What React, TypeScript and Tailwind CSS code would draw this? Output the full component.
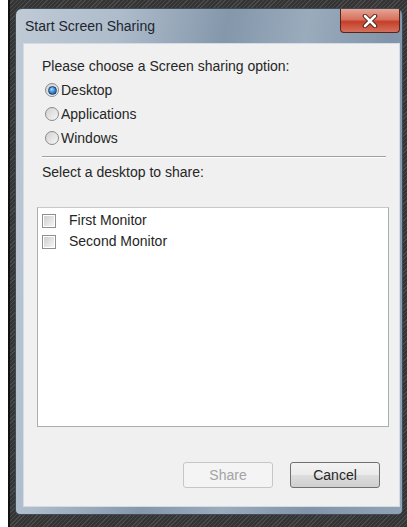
import React from "react";

const font = "font-['Liberation_Sans',Arial,sans-serif]";

function Radio({ label, checked }: { label: string; checked?: boolean }) {
    return (
        <div className="flex h-[24px] items-center">
            <span className="ml-[3px] flex h-[14px] w-[14px] items-center justify-center rounded-full border border-[#8b8b8b] bg-[linear-gradient(135deg,#d2d2d2,#f6f6f6)]">
                {checked && (
                    <span className="h-[9px] w-[9px] rounded-full border border-[#1c3e63] bg-[radial-gradient(circle_at_40%_35%,#a9dcff_0%,#3a8be0_45%,#0f4d9c_100%)]" />
                )}
            </span>
            <span className="ml-[2px] text-[14px] text-[#262626]">{label}</span>
        </div>
    );
}

function Check({ label }: { label: string }) {
    return (
        <div className="flex h-[21px] items-center">
            <span className="ml-[4px] h-[14px] w-[14px] border border-[#8f8f8f] bg-white p-[1px]">
                <span className="block h-full w-full bg-[linear-gradient(135deg,#cfcfcf,#f4f4f4)]" />
            </span>
            <span className="ml-[13px] text-[14px] text-[#262626]">{label}</span>
        </div>
    );
}

export default function App() {
    return (
        <div className={`flex h-[527px] w-[407px] overflow-hidden bg-white ${font}`}>
            <div className="w-[8px] shrink-0 bg-white" />
            <div className="w-[2px] shrink-0 bg-[#111]" />

            {/* desktop behind the dialog */}
            <div className="flex flex-1 flex-col bg-[repeating-linear-gradient(135deg,#343434_0px,#343434_2px,#4a4a4a_2px,#4a4a4a_3px)] pb-[12px] pl-[5px] pr-[4px] pt-[8px]">
                {/* aero window frame */}
                <div className="flex flex-1 flex-col rounded-b-[5px] rounded-t-[7px] border border-[#3f4c5a] bg-[linear-gradient(100deg,#bfcad5_0%,#aebccb_22%,#8497ab_45%,#9aabbc_62%,#8194a9_80%,#90a3b6_100%)]">
                    <div className="flex h-[34px] items-start justify-between">
                        <span className="ml-[9px] mt-[9px] text-[14px] leading-[16px] text-[#1d2630]">Start Screen Sharing</span>
                        <div className="mr-[2px] flex h-[24px] w-[60px] items-center justify-center rounded-b-[4px] border border-t-0 border-[#5a2318] bg-[linear-gradient(180deg,#e6a595_0%,#d8725f_45%,#c4402a_55%,#d5705c_100%)]">
                            <svg width="16" height="14" viewBox="0 0 16 14">
                                <path d="M3 2 L13 12 M13 2 L3 12" stroke="#4a1a12" strokeWidth="4.5" strokeLinecap="round" />
                                <path d="M3 2 L13 12 M13 2 L3 12" stroke="#fff" strokeWidth="2.6" strokeLinecap="round" />
                            </svg>
                        </div>
                    </div>

                    {/* client area */}
                    <div className="mb-[7px] ml-[7px] mr-[2px] flex flex-1 flex-col border border-[#d3dce5] bg-[#f0f0f0] pl-[18px] pr-[13px]">
                        <div className="mt-[14px] text-[14px] leading-[16px] text-[#262626]">
                            Please choose a Screen sharing option:
                        </div>
                        <div className="mt-[4px] flex flex-col">
                            <Radio label="Desktop" checked />
                            <Radio label="Applications" />
                            <Radio label="Windows" />
                        </div>
                        <div className="mt-[6px] h-[2px] border-t border-[#a0a0a0] border-b-white border-b" />
                        <div className="mt-[6px] text-[14px] leading-[16px] text-[#262626]">
                            Select a desktop to share:
                        </div>

                        <div className="-ml-[5px] -mr-[3px] mt-[27px] h-[220px] border border-[#abadb3] border-t-[#c9c9c9] bg-white pt-[2px]">
                            <Check label="First Monitor" />
                            <Check label="Second Monitor" />
                        </div>

                        <div className="mt-[35px] flex justify-end gap-[17px] pr-[6px]">
                            <button className="h-[26px] w-[90px] rounded-[3px] border border-[#c4c7ca] bg-[#f4f4f4] text-[14px] text-[#a3a3a3]">
                                Share
                            </button>
                            <button className="h-[26px] w-[90px] rounded-[3px] border border-[#707070] bg-[linear-gradient(180deg,#f3f3f3_0%,#ebebeb_48%,#dddddd_52%,#cfcfcf_100%)] text-[14px] text-[#262626]">
                                Cancel
                            </button>
                        </div>
                    </div>
                </div>
            </div>
        </div>
    );
}
